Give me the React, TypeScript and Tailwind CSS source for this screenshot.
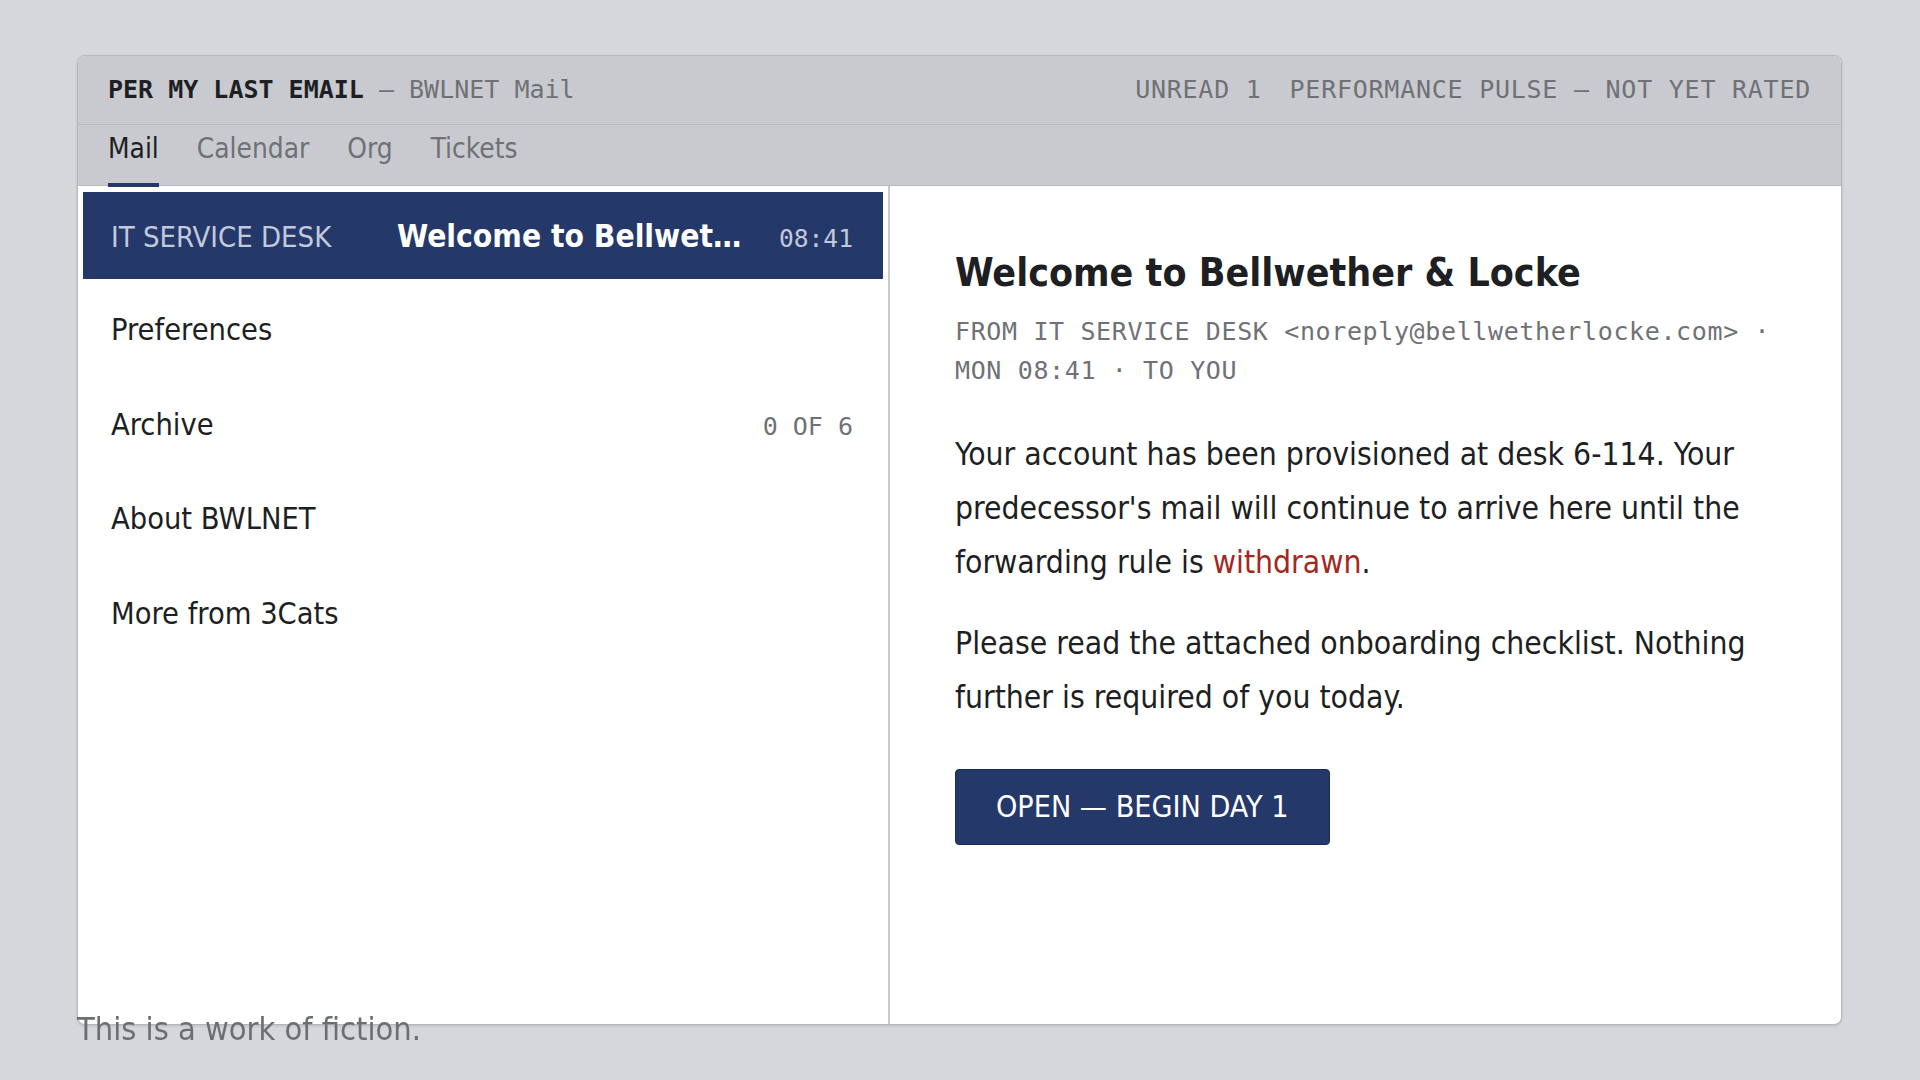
import React from "react";

const SANS = {
  fontFamily: '"DejaVu Sans Condensed", "DejaVu Sans", Verdana, sans-serif',
  fontStretch: "semi-condensed",
};

function Header() {
  return (
    <div className="flex h-[69px] items-center justify-between border-b border-[#b9bbc0] bg-[#c9cacf] px-[30px] font-['DejaVu_Sans_Mono',monospace] text-[25px]">
      <div className="whitespace-pre">
        <span className="font-bold text-[#1d1f23]">PER MY LAST EMAIL</span>
        <span className="text-[#6f7176]"> — BWLNET Mail</span>
      </div>
      <div className="flex gap-[28px] tracking-[0.03em] text-[#6f7176]">
        <span>UNREAD 1</span>
        <span>PERFORMANCE PULSE — NOT YET RATED</span>
      </div>
    </div>
  );
}

function Tabs() {
  const tabs = ["Mail", "Calendar", "Org", "Tickets"];
  return (
    <div className="flex h-[61px] gap-[38px] border-b border-[#b9bbc0] bg-[#c9cacf] px-[30px] text-[27.8px] leading-[32px]">
      {tabs.map((t, i) => (
        <div
          key={t}
          className={
            i === 0
              ? "relative z-10 h-[62px] border-b-4 border-[#25386a] pt-[8px] text-[#1d1f23]"
              : "h-[62px] border-b-4 border-transparent pt-[8px] text-[#6f7176]"
          }
        >
          {t}
        </div>
      ))}
    </div>
  );
}

function MessageList() {
  const items: { label: string; count?: string }[] = [
    { label: "Preferences" },
    { label: "Archive", count: "0 OF 6" },
    { label: "About BWLNET" },
    { label: "More from 3Cats" },
  ];
  return (
    <div className="flex w-[812px] shrink-0 flex-col gap-[7.5px] border-r-2 border-[#c8c9cd] px-[5px] pt-[6px]">
      <div className="flex h-[87px] items-center bg-[#25386a] pl-[28px] pr-[30px]">
        <div className="grid w-full grid-cols-[260px_1fr_auto] items-baseline gap-x-[26px] pt-[2px]">
          <span className="whitespace-nowrap text-[29px] text-[#c3c9dc]">IT SERVICE DESK</span>
          <span className="truncate text-[31.5px] font-bold text-white">Welcome to Bellwether &amp; Locke</span>
          <span className="ml-[4px] font-['DejaVu_Sans_Mono',monospace] text-[24.6px] text-[#c3c9dc]">08:41</span>
        </div>
      </div>
      {items.map((it) => (
        <div key={it.label} className="flex h-[87px] items-center pl-[28px] pr-[30px]">
          <div className="flex w-full items-baseline justify-between">
            <span className="text-[30.5px] text-[#1d1f23]">{it.label}</span>
            {it.count && (
              <span className="font-['DejaVu_Sans_Mono',monospace] text-[25px] text-[#6f7176]">{it.count}</span>
            )}
          </div>
        </div>
      ))}
    </div>
  );
}

function Reader() {
  return (
    <div className="flex-1 pl-[65px] pr-[40px] pt-[64px] text-[#1d1f23]">
      <h1 className="text-[39px] font-bold leading-[46px]">Welcome to Bellwether &amp; Locke</h1>
      <div className="mt-[16px] max-w-[822px] font-['DejaVu_Sans_Mono',monospace] text-[25px] leading-[39px] tracking-[0.025em] text-[#6f7176]">
        FROM IT SERVICE DESK &lt;noreply@bellwetherlocke.com&gt; · MON 08:41 · TO YOU
      </div>
      <div className="mt-[37px] max-w-[822px] text-[31.6px] leading-[54px]">
        <p>
          Your account has been provisioned at desk 6-114. Your predecessor's mail will continue to arrive here
          until the forwarding rule is <span className="text-[#a3281d]">withdrawn</span>.
        </p>
        <p className="mt-[27px]">
          Please read the attached onboarding checklist. Nothing further is required of you today.
        </p>
      </div>
      <button className="mt-[45px] flex h-[76px] items-center rounded-[4px] border border-[#1b2b55] bg-[#25386a] px-[40px] text-[30.2px] text-white">
        OPEN — BEGIN DAY 1
      </button>
    </div>
  );
}

export default function App() {
  return (
    <div className="relative min-h-screen bg-[#d6d7db] pl-[77px] pt-[55px]" style={SANS}>
      <div className="flex h-[970px] w-[1765px] flex-col overflow-hidden rounded-[8px] border border-[#b5b7bc] bg-white shadow-[0_1px_3px_rgba(0,0,0,0.12)]">
        <Header />
        <Tabs />
        <div className="flex min-h-0 flex-1">
          <MessageList />
          <Reader />
        </div>
      </div>
      <p className="fixed bottom-[27px] left-[77px] text-[32.3px] text-[#6b6e73]">This is a work of fiction.</p>
    </div>
  );
}
